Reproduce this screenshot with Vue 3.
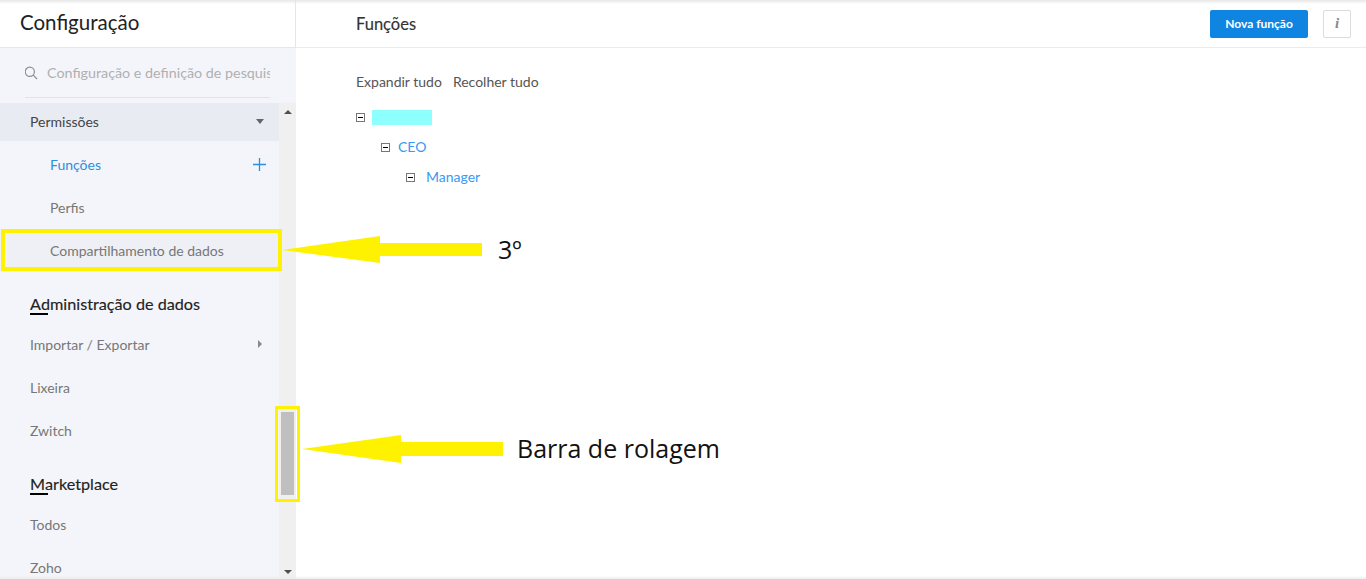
<script setup>
const adminItems = ['Lixeira', 'Zwitch']
const marketItems = ['Todos', 'Zoho']
</script>

<template>
  <div class="page">
    <aside class="sidebar">
      <div class="side-head">Configuração</div>
      <div class="search">
        <svg class="search-icon" width="14" height="14" viewBox="0 0 14 14" fill="none" stroke="#8f8f8f" stroke-width="1.2">
          <circle cx="5.8" cy="5.8" r="4.6" />
          <path d="M9.2 9.2L13 13" />
        </svg>
        <span class="search-text">Configuração e definição de pesquisa</span>
      </div>
      <div class="menu-wrap">
        <nav class="menu">
          <div class="row open">
            <span>Permissões</span>
            <i class="caret-down"></i>
          </div>
          <div class="row sub active">
            <span>Funções</span>
            <svg width="13" height="13" viewBox="0 0 13 13" stroke="#2a8fe0" stroke-width="1.3"><path d="M6.5 0V13M0 6.5H13" /></svg>
          </div>
          <div class="row sub">Perfis</div>
          <div class="row sub hover">Compartilhamento de dados</div>
          <h3 class="section first"><span class="first-letter">A</span>dministração de dados</h3>
          <div class="row">
            <span>Importar / Exportar</span>
            <i class="caret-right"></i>
          </div>
          <div v-for="item in adminItems" :key="item" class="row">{{ item }}</div>
          <h3 class="section"><span class="first-letter">M</span>arketplace</h3>
          <div v-for="item in marketItems" :key="item" class="row">{{ item }}</div>
        </nav>
        <div class="scrollbar">
          <i class="sb-up"></i>
          <div class="sb-thumb"></div>
          <i class="sb-down"></i>
        </div>
      </div>
    </aside>

    <main class="content">
      <header class="top">
        <span class="title">Funções</span>
        <div class="actions">
          <button class="primary">Nova função</button>
          <button class="info">i</button>
        </div>
      </header>
      <div class="body">
        <div class="links">
          <span>Expandir tudo</span>
          <span>Recolher tudo</span>
        </div>
        <ul class="tree">
          <li class="node"><i class="minus"></i><span class="masked"></span></li>
          <li class="node level1"><i class="minus"></i><span class="role">CEO</span></li>
          <li class="node level2"><i class="minus"></i><span class="role">Manager</span></li>
        </ul>
      </div>
    </main>

    <!-- marcações feitas sobre a captura -->
    <div class="mark box-item"></div>
    <div class="mark box-scroll"></div>
    <svg class="arrow arrow-one" width="200" height="56" viewBox="0 0 200 56">
      <polygon points="0,28 98,14 98,21 200,21 200,34 98,34 98,41" fill="#fff200" />
    </svg>
    <svg class="arrow arrow-two" width="201" height="56" viewBox="0 0 201 56">
      <polygon points="0,29 99,15 99,22 201,22 201,36 99,36 99,43" fill="#fff200" />
    </svg>
    <span class="note note-one">3º</span>
    <span class="note note-two">Barra de rolagem</span>
  </div>
</template>

<style>
html, body {
  margin: 0;
  background: #fff;
}
</style>

<style scoped>
.page {
  position: relative;
  display: flex;
  width: 1366px;
  height: 579px;
  overflow: hidden;
  font-family: Lato, "Liberation Sans", sans-serif;
  font-size: 14px;
  color: #777;
}

.page::before {
  content: "";
  position: absolute;
  left: 0;
  right: 0;
  top: 0;
  height: 4px;
  background: linear-gradient(#e6e6e6, rgba(255, 255, 255, 0));
  z-index: 2;
}

.page::after {
  content: "";
  position: absolute;
  left: 0;
  right: 0;
  bottom: 0;
  height: 3px;
  background: linear-gradient(rgba(240, 240, 240, 0), #ececec);
}

.sidebar {
  display: flex;
  flex-direction: column;
  flex: none;
  width: 296px;
  background: #f4f5fa;
}

.side-head {
  flex: none;
  height: 48px;
  box-sizing: border-box;
  padding: 8px 0 0 20px;
  background: #fff;
  border-bottom: 1px solid #e6e6e6;
  border-right: 1px solid #e6e6e6;
  font-size: 20.5px;
  line-height: 28px;
  color: #222;
}

.search {
  flex: none;
  display: flex;
  align-items: center;
  gap: 9px;
  height: 49px;
  margin: 0 26px 0 25px;
  border-bottom: 1px solid #e2e3e8;
  overflow: hidden;
  white-space: nowrap;
}

.search-icon {
  flex: none;
  margin-left: -1px;
}

.search-text {
  color: #b0b0b0;
  font-size: 14.3px;
}

.menu-wrap {
  flex: 1;
  display: flex;
  min-height: 0;
  margin-top: 5px;
}

.menu {
  flex: 1;
  min-width: 0;
  overflow: hidden;
}

.row {
  display: flex;
  align-items: center;
  justify-content: space-between;
  height: 43px;
  padding: 0 17px 0 30px;
  box-sizing: border-box;
}

.row.open {
  height: 38px;
  margin-bottom: 2px;
  padding-right: 15px;
  padding-bottom: 1px;
  background: #e8ebf2;
  color: #444;
}

.row.sub {
  padding-left: 50px;
  padding-right: 13px;
}

.row.active {
  color: #2a8fe0;
}

.row.hover {
  background: #eef0f5;
}

.caret-down {
  width: 0;
  height: 0;
  border-left: 4.5px solid transparent;
  border-right: 4.5px solid transparent;
  border-top: 5px solid #666;
}

.caret-right {
  width: 0;
  height: 0;
  border-top: 4px solid transparent;
  border-bottom: 4px solid transparent;
  border-left: 4px solid #888;
  margin-bottom: 2px;
}

.section {
  margin: 0;
  padding: 22px 0 0 30px;
  height: 29px;
  font-size: 16.2px;
  font-weight: 400;
  line-height: 20px;
  color: #222;
  -webkit-text-stroke: 0.15px #222;
}

.first-letter {
  position: relative;
  display: inline-block;
}

.first-letter::after {
  content: "";
  position: absolute;
  left: 0;
  top: 19px;
  width: 18px;
  height: 2px;
  background: #000;
}

.scrollbar {
  flex: none;
  position: relative;
  width: 17px;
  background: #f0f0f0;
}

.sb-up,
.sb-down {
  position: absolute;
  left: 5px;
  width: 0;
  height: 0;
  border-left: 4px solid transparent;
  border-right: 4px solid transparent;
}

.sb-up {
  top: 7px;
  border-bottom: 4px solid #505050;
}

.sb-down {
  bottom: 5px;
  border-top: 4px solid #505050;
}

.sb-thumb {
  position: absolute;
  left: 2px;
  top: 309px;
  width: 13px;
  height: 83px;
  background: #bfbfbf;
}

.content {
  flex: 1;
  min-width: 0;
  background: #fff;
}

.top {
  display: flex;
  align-items: center;
  justify-content: space-between;
  height: 48px;
  box-sizing: border-box;
  padding: 0 15px 0 60px;
  border-bottom: 1px solid #ececec;
}

.title {
  font-size: 16.5px;
  color: #333;
  -webkit-text-stroke: 0.15px #333;
}

.actions {
  display: flex;
  align-items: center;
  gap: 15px;
}

.primary {
  width: 98px;
  height: 28px;
  padding: 0;
  border: 0;
  border-radius: 2px;
  background: #0f84e0;
  color: #fff;
  font-family: inherit;
  font-size: 12px;
  font-weight: 700;
}

.info {
  width: 28px;
  height: 28px;
  padding: 0;
  border: 1px solid #dcdcdc;
  border-radius: 2px;
  background: #fff;
  color: #888;
  font-family: "Liberation Serif", serif;
  font-size: 15px;
  font-style: italic;
  font-weight: 700;
}

.body {
  padding: 24px 60px 0;
}

.links {
  display: flex;
  gap: 11px;
  line-height: 20px;
  color: #555;
}

.tree {
  list-style: none;
  margin: 10px 0 0;
  padding: 0;
}

.node {
  display: flex;
  align-items: center;
  height: 30px;
}

.level1 {
  padding-left: 25px;
}

.level2 {
  padding-left: 50px;
}

.minus {
  position: relative;
  flex: none;
  width: 7px;
  height: 7px;
  border: 1px solid #777;
  margin-right: 8px;
}

.minus::after {
  content: "";
  position: absolute;
  left: 1px;
  right: 1px;
  top: 3px;
  height: 1px;
  background: #000;
}

.node:first-child .minus {
  margin-right: 7px;
}

.level2 .minus {
  margin-right: 11px;
}

.masked {
  width: 60px;
  height: 15px;
  background: #8effff;
}

.role {
  margin-bottom: 2px;
  color: #3b99f0;
}

.mark {
  position: absolute;
  box-sizing: border-box;
  border-style: solid;
  border-color: #fff200;
}

.box-item {
  left: 1px;
  top: 229px;
  width: 281px;
  height: 42px;
  border-width: 4px;
}

.box-scroll {
  left: 275px;
  top: 406px;
  width: 25px;
  height: 96px;
  border-width: 3px;
}

.arrow {
  position: absolute;
}

.arrow-one {
  left: 282px;
  top: 222px;
}

.arrow-two {
  left: 302px;
  top: 420px;
}

.note {
  position: absolute;
  color: #111;
  font-family: "Open Sans", sans-serif;
  font-size: 25px;
  line-height: 34px;
}

.note-one {
  left: 498px;
  top: 232px;
}

.note-two {
  left: 517px;
  top: 431px;
}
</style>
